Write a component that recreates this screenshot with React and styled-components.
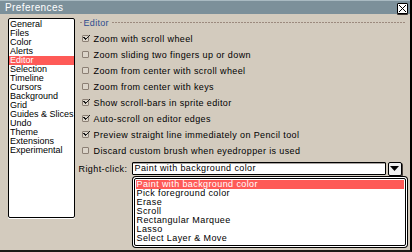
import React from 'react';
import styled, { createGlobalStyle, css } from 'styled-components';

const GlobalStyle = createGlobalStyle`
    html, body {
        margin: 0;
        padding: 0;
        background: #d3cbbe;
    }
    body {
        font-family: "Liberation Sans", Arial, sans-serif;
        font-size: 9px;
        color: #000;
    }
`;

const Window = styled.div`
    width: 412px;
    height: 252px;
    box-sizing: border-box;
    background: #d3cbbe;
    border-right: 2px solid #000;
    border-bottom: 2px solid #1e1a18;
    display: flex;
    flex-direction: column;
    overflow: hidden;
`;

const TitleBar = styled.div`
    height: 13px;
    flex: none;
    background: #7c909a;
    border-top: 1px solid #a9bac2;
    display: flex;
    align-items: center;
    justify-content: space-between;
    padding: 0 2px 0 5px;
    span {
        color: #fff;
        font-size: 10px;
        letter-spacing: 0.4px;
        line-height: 13px;
    }
`;

const CloseButton = styled.div`
    width: 9px;
    height: 9px;
    margin-top: 2px;
    background: #fff;
    border: 1px solid #000;
    border-radius: 1px;
    box-shadow: 0 1px 0 #3b3531;
    display: flex;
    align-items: center;
    justify-content: center;
`;

const Body = styled.div`
    flex: 1;
    display: flex;
    flex-direction: column;
    padding: 4px 0 0 8px;
`;

const Columns = styled.div`
    display: flex;
    column-gap: 4px;
`;

const SectionList = styled.ul`
    list-style: none;
    margin: 0;
    padding: 1px 0;
    width: 66px;
    height: 196px;
    background: #fff;
    border: 1px solid #000;
    border-radius: 2px;
    box-shadow: 0 1px 0 #fff;
`;

const SectionItem = styled.li`
    height: 9px;
    line-height: 9px;
    padding-left: 1px;
    white-space: nowrap;
    ${(props) =>
        props.selected &&
        css`
            background: #fe5a57;
            color: #fff;
        `};
`;

const Panel = styled.div`
    flex: 1;
    display: flex;
    flex-direction: column;
    padding-right: 5px;
`;

const GroupTitle = styled.div`
    display: flex;
    align-items: center;
    height: 9px;
    &::before {
        content: '';
        width: 2px;
        height: 1px;
        margin: 0 2px 0 1px;
        background: #9c8a7e;
    }
    &::after {
        content: '';
        flex: 1;
        height: 1px;
        margin-left: 3px;
        background: repeating-linear-gradient(90deg, #9c8a7e 0 2px, transparent 2px 3px);
    }
    span {
        color: #2d4c8e;
        letter-spacing: 0.3px;
    }
`;

const Options = styled.div`
    display: flex;
    flex-direction: column;
    row-gap: 7px;
    padding: 7px 0 0 3px;
`;

const OptionRow = styled.label`
    display: flex;
    align-items: center;
    column-gap: 5px;
    height: 9px;
    letter-spacing: 0.38px;
    white-space: nowrap;
`;

const CheckBox = styled.span`
    width: 5px;
    height: 5px;
    flex: none;
    border: 1px solid #8b7f74;
    border-radius: 1px;
    background: #dcd5ca;
    position: relative;
`;

const RightClickRow = styled.div`
    display: flex;
    align-items: center;
    margin-top: 6px;
    height: 15px;
    letter-spacing: 0.4px;
    span {
        width: 53px;
    }
`;

const Field = styled.div`
    width: 254px;
    box-sizing: border-box;
    height: 13px;
    background: #fff;
    border: 1px solid #000;
    border-radius: 1px;
    box-shadow: inset 0 1px 0 #a8a3a0;
    padding-left: 2px;
    line-height: 11px;
    letter-spacing: 0.4px;
`;

const DropButton = styled.div`
    width: 14px;
    height: 14px;
    box-sizing: border-box;
    margin-left: 2px;
    background: #efefef;
    border: 1px solid #000;
    border-radius: 2px;
    box-shadow: 1px 1px 0 #4a423d;
    display: flex;
    align-items: center;
    justify-content: center;
`;

const Popup = styled.ul`
    list-style: none;
    margin: 2px 0 0 55px;
    padding: 1px;
    width: 268px;
    height: 64px;
    background: #fff;
    border: 1px solid #000;
    border-radius: 2px;
    box-shadow: 0 0 0 1px #fff, 0 0 0 2px #000;
`;

const PopupItem = styled.li`
    height: 9px;
    line-height: 9px;
    padding-left: 1px;
    letter-spacing: 0.4px;
    white-space: nowrap;
    ${(props) =>
        props.selected &&
        css`
            background: #fe5a57;
            color: #fff;
        `};
`;

const Separator = styled.div`
    height: 1px;
    margin: 8px 8px 0 -2px;
    background: repeating-linear-gradient(90deg, #9c8a7e 0 2px, transparent 2px 3px);
`;

const sections = [
    'General', 'Files', 'Color', 'Alerts', 'Editor', 'Selection', 'Timeline', 'Cursors',
    'Background', 'Grid', 'Guides & Slices', 'Undo', 'Theme', 'Extensions', 'Experimental',
];

const options = [
    ['Zoom with scroll wheel', true],
    ['Zoom sliding two fingers up or down', false],
    ['Zoom from center with scroll wheel', false],
    ['Zoom from center with keys', false],
    ['Show scroll-bars in sprite editor', true],
    ['Auto-scroll on editor edges', true],
    ['Preview straight line immediately on Pencil tool', true],
    ['Discard custom brush when eyedropper is used', false],
];

const rightClick = [
    'Paint with background color', 'Pick foreground color', 'Erase', 'Scroll',
    'Rectangular Marquee', 'Lasso', 'Select Layer & Move',
];

const Check = () => (
    <svg width="7" height="6" viewBox="0 0 7 6" style={{ position: 'absolute', left: 0, top: -1 }}>
        <path d="M0 3h1v1h1v1h1V4h1V3h1V2h1V1h1V0h-1v1h-1v1h-1v1h-1v1H3V3H2V2H0z" fill="#1b1b1b" />
    </svg>
);

const App = () => {
    return (
        <>
            <GlobalStyle />
            <Window>
                <TitleBar>
                    <span>Preferences</span>
                    <CloseButton>
                        <svg width="7" height="7" viewBox="0 0 7 7">
                            <path d="M0 0h1v1h1v1h1v1h1V2h1V1h1V0h1v1H6v1H5v1H4v1h1v1h1v1h1v1H6V6H5V5H4V4H3v1H2v1H1v1H0V6h1V5h1V4h1V3H2V2H1V1H0z" fill="#000" />
                        </svg>
                    </CloseButton>
                </TitleBar>
                <Body>
                    <Columns>
                        <SectionList>
                            {sections.map((s) => (
                                <SectionItem key={s} selected={s === 'Editor'}>{s}</SectionItem>
                            ))}
                        </SectionList>
                        <Panel>
                            <GroupTitle><span>Editor</span></GroupTitle>
                            <Options>
                                {options.map(([label, on]) => (
                                    <OptionRow key={label}>
                                        <CheckBox>{on && <Check />}</CheckBox>
                                        {label}
                                    </OptionRow>
                                ))}
                            </Options>
                            <RightClickRow>
                                <span>Right-click:</span>
                                <Field>Paint with background color</Field>
                                <DropButton>
                                    <svg width="9" height="5" viewBox="0 0 9 5">
                                        <path d="M0 0h9L4.5 5z" fill="#000" />
                                    </svg>
                                </DropButton>
                            </RightClickRow>
                            <Popup>
                                {rightClick.map((r, i) => (
                                    <PopupItem key={r} selected={i === 0}>{r}</PopupItem>
                                ))}
                            </Popup>
                        </Panel>
                    </Columns>
                    <Separator />
                </Body>
            </Window>
        </>
    );
};

export default App;
